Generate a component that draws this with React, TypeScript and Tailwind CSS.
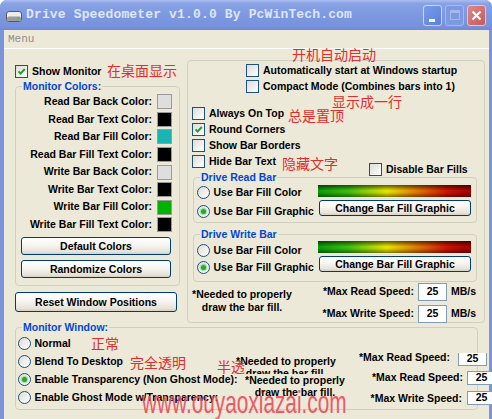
import React from "react";

const Check = ({ checked = false }: { checked?: boolean }) => (
  <span className="flex h-[13px] w-[13px] shrink-0 items-center justify-center border border-[#1c5180] bg-[linear-gradient(135deg,#dcdcd7,#ffffff)]">
    {checked && (
      <svg width="9" height="9" viewBox="0 0 9 9">
        <path d="M1.5 4.3 L3.6 6.5 L7.8 2" stroke="#21a121" strokeWidth="1.9" fill="none" />
      </svg>
    )}
  </span>
);

const Radio = ({ checked = false }: { checked?: boolean }) => (
  <span className="flex h-[13px] w-[13px] shrink-0 items-center justify-center rounded-full border border-[#1c5180] bg-[linear-gradient(135deg,#dcdcd7,#ffffff)]">
    {checked && <span className="h-[5px] w-[5px] rounded-full bg-[#2fa52f] shadow-[0_0_1px_1px_#8fe08f]" />}
  </span>
);

const CheckRow = ({ label, checked = false, className = "" }: { label: string; checked?: boolean; className?: string }) => (
  <div className={`flex h-[13px] items-center gap-[4px] ${className}`}>
    <Check checked={checked} />
    <span className="whitespace-nowrap leading-[13px]">{label}</span>
  </div>
);

const RadioRow = ({ label, checked = false }: { label: string; checked?: boolean }) => (
  <div className="flex h-[13px] items-center gap-[3.5px]">
    <Radio checked={checked} />
    <span className="whitespace-nowrap leading-[13px]">{label}</span>
  </div>
);

const Btn = ({ children, className = "" }: { children: React.ReactNode; className?: string }) => (
  <div
    className={`flex items-center justify-center whitespace-nowrap rounded-[3px] border border-[#003c74] bg-[linear-gradient(to_bottom,#ffffff,#f6f5f0_45%,#e6e3d8_85%,#d6d0c5)] leading-none ${className}`}
  >
    {children}
  </div>
);

const Bar = () => (
  <div className="h-[12px] w-[153px] bg-[image:linear-gradient(to_bottom,rgba(0,0,0,0.6),rgba(0,0,0,0)_45%,rgba(0,0,0,0)_60%,rgba(0,0,0,0.45)),linear-gradient(to_right,#0a9a0a,#3cbd10_20%,#e6e400_45%,#e07000_66%,#cc1400_84%,#a00000)]" />
);

const SpeedRow = ({ label, className = "" }: { label: string; className?: string }) => (
  <div className={`flex h-[18px] items-center ${className}`}>
    <span className="w-[95px] whitespace-nowrap text-right">{label}</span>
    <span className="ml-[4px] flex h-[18px] w-[29px] items-center justify-center border border-[#7f9db9] bg-white">25</span>
    <span className="ml-[4px]">MB/s</span>
  </div>
);

const colorRows: [string, string][] = [
  ["Read Bar Back Color:", "bg-[#dedede]"],
  ["Read Bar Text Color:", "bg-[#000000]"],
  ["Read Bar Fill Color:", "bg-[#19b4b3]"],
  ["Read Bar Fill Text Color:", "bg-[#000000]"],
  ["Write Bar Back Color:", "bg-[#dedede]"],
  ["Write Bar Text Color:", "bg-[#000000]"],
  ["Write Bar Fill Color:", "bg-[#00b300]"],
  ["Write Bar Fill Text Color:", "bg-[#000000]"],
];

const cn = "absolute whitespace-nowrap font-['Noto_Sans_CJK_SC',sans-serif] text-[14px] font-normal leading-[14px] text-[#e42c2c]";

export default function App() {
  return (
    <div className="relative h-[419px] w-[492px] overflow-hidden rounded-t-[7px] bg-[#7a94dc] font-['Liberation_Sans',Arial,sans-serif] text-[10.5px] font-bold text-black">
      {/* Title bar */}
      <div className="flex h-[30px] items-center bg-[linear-gradient(to_bottom,#aabdf0,#88a2e5_12%,#7d98e0_50%,#7893de_85%,#6f89d6)] pl-[6px] pr-[6px]">
        <svg className="mt-[3px] shrink-0" width="16" height="11" viewBox="0 0 16 11">
          <rect x="0.5" y="0.5" width="15" height="10" rx="2.5" fill="#ececec" stroke="#5a5a5a" />
          <rect x="1" y="5.5" width="14" height="4.5" rx="2" fill="#9c9c9c" />
          <rect x="11" y="6.5" width="2.5" height="2" fill="#33cc33" />
        </svg>
        <span className="ml-[4px] whitespace-nowrap font-['Liberation_Mono',monospace] text-[13px] font-bold tracking-[0.15px] text-[#dde6f9]">
          Drive Speedometer v1.0.0 By PcWinTech.com
        </span>
        <div className="ml-auto flex gap-[3px]">
          <div className="relative h-[21px] w-[19px] rounded-[3px] border border-[#c9d6f6] bg-[linear-gradient(135deg,#7b9ce8,#5a7ee0)]">
            <span className="absolute left-[5px] top-[13px] h-[3px] w-[6px] bg-white" />
          </div>
          <div className="relative h-[21px] w-[19px] rounded-[3px] border border-[#a7b9ec] bg-[#7f99e1]">
            <span className="absolute left-[4px] top-[4px] h-[10px] w-[10px] border border-t-[3px] border-[#a4b8ee]" />
          </div>
          <div className="relative flex h-[21px] w-[19px] items-center justify-center rounded-[3px] border border-[#eac4c4] bg-[linear-gradient(135deg,#de8a88,#c4595a)]">
            <svg width="11" height="11" viewBox="0 0 11 11">
              <path d="M1.5 1.5 L9.5 9.5 M9.5 1.5 L1.5 9.5" stroke="#ffffff" strokeWidth="2" />
            </svg>
          </div>
        </div>
      </div>

      {/* Client area */}
      <div className="ml-[4px] mr-[3px] h-[389px] bg-[#ece9d8]">
        <div className="flex h-[18px] items-center pl-[4px] font-['Liberation_Mono',monospace] text-[11px] font-normal text-[#8d8d8d]">
          Menu
        </div>
        <div className="h-[2px] border-t border-white" />

        <div className="flex h-[273px]">
          {/* Left column */}
          <div className="ml-[11px] flex w-[166px] flex-col">
            <CheckRow className="mt-[15px]" label="Show Monitor" checked />
            <fieldset className="mt-[2px] w-[165px] rounded-[4px] border border-[#d0d0bf] pb-[7px]">
              <legend className="ml-[6px] px-[1px] leading-[12px] text-[#0046d5]">Monitor Colors:</legend>
              <div className="flex flex-col pt-[1px]">
                {colorRows.map(([l, c]) => (
                  <div key={l} className="flex h-[17.6px] items-center justify-end pr-[7px]">
                    <span className="whitespace-nowrap">{l}</span>
                    <span className={`ml-[5px] h-[15px] w-[15px] border border-[#9a9a9a] ${c}`} />
                  </div>
                ))}
              </div>
              <Btn className="ml-[5px] mt-[3.5px] h-[18px] w-[150px]">Default Colors</Btn>
              <Btn className="ml-[5px] mt-[5px] h-[18px] w-[150px]">Randomize Colors</Btn>
            </fieldset>
            <Btn className="mt-[6px] h-[20px] w-[162px]">Reset Window Positions</Btn>
          </div>

          {/* Right column */}
          <div className="ml-[6px] mt-[10px] flex h-[263px] w-[298px] flex-col rounded-[4px] border border-[#d0d0bf]">
            <CheckRow className="ml-[58px] mt-[3px]" label="Automatically start at Windows startup" />
            <CheckRow className="ml-[58px] mt-[3px]" label="Compact Mode (Combines bars into 1)" />
            <CheckRow className="ml-[4px] mt-[14px]" label="Always On Top" />
            <CheckRow className="ml-[4px] mt-[3px]" label="Round Corners" checked />
            <CheckRow className="ml-[4px] mt-[3px]" label="Show Bar Borders" />
            <div className="ml-[4px] mt-[3px] flex items-start">
              <CheckRow className="w-[177px]" label="Hide Bar Text" />
              <CheckRow className="mt-[8px]" label="Disable Bar Fills" />
            </div>

            <fieldset className="-mt-[5px] ml-[5px] w-[284px] rounded-[4px] border border-[#d0d0bf]">
              <legend className="ml-[6px] px-[1px] leading-[12px] text-[#0046d5]">Drive Read Bar</legend>
              <div className="flex justify-between pb-[4px] pr-[5px]">
                <div className="flex flex-col gap-[6px] pl-[3px] pt-[3px]">
                  <RadioRow label="Use Bar Fill Color" />
                  <RadioRow label="Use Bar Fill Graphic" checked />
                </div>
                <div className="flex flex-col items-end pt-[2px]">
                  <Bar />
                  <Btn className="mt-[3px] h-[16px] w-[152px]">Change Bar Fill Graphic</Btn>
                </div>
              </div>
            </fieldset>

            <fieldset className="ml-[5px] mt-[5px] w-[284px] rounded-[4px] border border-[#d0d0bf]">
              <legend className="ml-[6px] px-[1px] leading-[12px] text-[#0046d5]">Drive Write Bar</legend>
              <div className="flex justify-between pb-[7px] pr-[5px]">
                <div className="flex flex-col gap-[4px] pl-[3px] pt-[4px]">
                  <RadioRow label="Use Bar Fill Color" />
                  <RadioRow label="Use Bar Fill Graphic" checked />
                </div>
                <div className="flex flex-col items-end pt-[1px]">
                  <Bar />
                  <Btn className="mt-[3px] h-[16px] w-[152px]">Change Bar Fill Graphic</Btn>
                </div>
              </div>
            </fieldset>

            <div className="flex">
              <div className="mt-[6px] w-[108px] text-center leading-[13px]">
                *Needed to properly
                <br />
                draw the bar fill.
              </div>
              <div className="ml-[23px] flex flex-col">
                <SpeedRow className="mt-[1px]" label="*Max Read Speed:" />
                <SpeedRow className="mt-[4px]" label="*Max Write Speed:" />
              </div>
            </div>
          </div>
        </div>

        {/* Monitor Window group */}
        <fieldset className="-mt-[2px] ml-[11px] w-[463px] rounded-[4px] border border-[#d0d0bf] pb-[5px]">
          <legend className="ml-[6px] px-[1px] leading-[12px] text-[#0046d5]">Monitor Window:</legend>
          <div className="flex flex-col gap-[5px] pl-[2px] pt-[3.5px]">
            <RadioRow label="Normal" />
            <RadioRow label="Blend To Desktop" />
            <RadioRow label="Enable Transparency (Non Ghost Mode):" checked />
            <RadioRow label="Enable Ghost Mode w/Transparency:" />
          </div>
        </fieldset>
      </div>

      {/* Overlapping leftovers of the broken layout */}
      <div className="absolute left-[236px] top-[354px] h-[20px] w-[100px] overflow-hidden bg-[#ece9d8] pt-[1px] text-center leading-[12px]">
        *Needed to properly
        <br />
        draw the bar fill.
      </div>
      <div className="absolute left-[245px] top-[374px] h-[24px] w-[100px] overflow-hidden bg-[#ece9d8] text-center leading-[12px]">
        *Needed to properly
        <br />
        draw the bar fill.
      </div>
      <span className="absolute right-[42px] top-[351px] whitespace-nowrap leading-[12px]">*Max Read Speed:</span>
      <span className="absolute left-[458px] top-[353px] flex h-[13px] w-[29px] justify-center border-x border-b border-[#7f9db9] bg-white leading-[10px]">25</span>
      <span className="absolute right-[29px] top-[371px] whitespace-nowrap leading-[12px]">*Max Read Speed:</span>
      <span className="absolute left-[467px] top-[371px] flex h-[14px] w-[29px] items-center justify-center border border-[#7f9db9] bg-white">25</span>
      <span className="absolute right-[30px] top-[392px] whitespace-nowrap leading-[12px]">*Max Write Speed:</span>
      <span className="absolute left-[467px] top-[391px] flex h-[14px] w-[29px] items-center justify-center border border-[#7f9db9] bg-white">25</span>

      {/* Red annotations */}
      <span className={`${cn} left-[107px] top-[63px]`}>在桌面显示</span>
      <span className={`${cn} left-[292px] top-[47px]`}>开机自动启动</span>
      <span className={`${cn} left-[332px] top-[94px]`}>显示成一行</span>
      <span className={`${cn} left-[288px] top-[108px]`}>总是置顶</span>
      <span className={`${cn} left-[282px] top-[156px]`}>隐藏文字</span>
      <span className={`${cn} left-[91px] top-[336px]`}>正常</span>
      <span className={`${cn} left-[130px] top-[355px]`}>完全透明</span>
      <span className={`${cn} left-[217px] top-[359px]`}>半透</span>

      {/* Watermark */}
      <span className="absolute left-[142px] top-[386px] origin-left scale-x-[0.65] whitespace-nowrap text-[32px] font-normal leading-[32px] text-[#ea4c5c] opacity-90">
        www.ouyaoxiazai.com
      </span>
    </div>
  );
}
